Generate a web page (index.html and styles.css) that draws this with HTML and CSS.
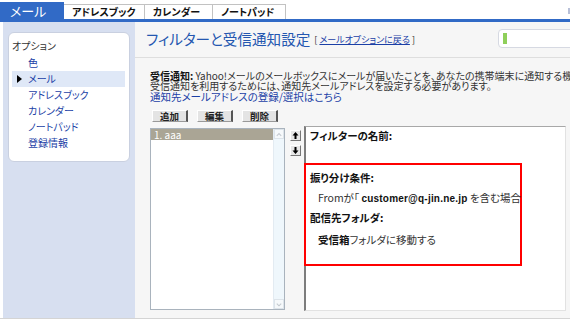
FILE: index.html
```html
<!DOCTYPE html>
<html lang="ja">
<head>
<meta charset="utf-8">
<title>フィルターと受信通知設定</title>
<link rel="stylesheet" href="styles.css">
</head>
<body>
<div class="page">
  <div class="tabs">
    <div class="tab active">メール</div>
    <div class="tab t-addr">アドレスブック</div>
    <div class="tab t-cal">カレンダー</div>
    <div class="tab t-note">ノートパッド</div>
    <div class="tab-fill"><span class="grip"></span></div>
  </div>
  <div class="bar"></div>
  <div class="body">
    <aside class="side">
      <div class="sidebox">
        <div class="side-title">オプション</div>
        <ul class="side-list">
          <li><a>色</a></li>
          <li class="current"><span class="tri"></span><a>メール</a></li>
          <li><a>アドレスブック</a></li>
          <li><a>カレンダー</a></li>
          <li><a>ノートパッド</a></li>
          <li><a>登録情報</a></li>
        </ul>
      </div>
    </aside>
    <main class="main">
      <div class="head">
        <h1>フィルターと受信通知設定</h1>
        <span class="back">[ <a>メールオプションに戻る</a> ]</span>
        <div class="meter"><span class="meter-fill"></span></div>
      </div>
      <div class="content">
        <div class="notice">
          <div class="nline"><b>受信通知:</b> Yahoo!メールのメールボックスにメールが届いたことを、あなたの携帯端末に通知する機能です。</div>
          <div class="nline">受信通知を利用するためには、通知先メールアドレスを設定する必要があります。</div>
          <a class="nlink">通知先メールアドレスの登録/選択はこちら</a>
        </div>
        <div class="btns">
          <span class="btn">追加</span>
          <span class="btn">編集</span>
          <span class="btn">削除</span>
        </div>
        <div class="editor">
          <div class="list">
            <div class="items">
              <div class="item sel">1. aaa</div>
            </div>
            <div class="scroll">
              <span class="sarrow"><svg width="9" height="9" viewBox="0 0 9 9"><path d="M2 6 L4.5 3.5 L7 6" fill="none" stroke="#c4cad0" stroke-width="1.2"/></svg></span>
              <span class="sarrow"><svg width="9" height="9" viewBox="0 0 9 9"><path d="M2 3.5 L4.5 6 L7 3.5" fill="none" stroke="#c4cad0" stroke-width="1.2"/></svg></span>
            </div>
          </div>
          <div class="arrows">
            <span class="abtn"><svg width="9" height="9" viewBox="0 0 9 9"><path d="M4.5 1 L1.5 4.5 H3.5 V8 H5.5 V4.5 H7.5 Z" fill="#000"/></svg></span>
            <span class="abtn"><svg width="9" height="9" viewBox="0 0 9 9"><path d="M4.5 8 L1.5 4.5 H3.5 V1 H5.5 V4.5 H7.5 Z" fill="#000"/></svg></span>
          </div>
          <div class="panel">
            <div class="plabel">フィルターの名前:</div>
            <div class="rule">
              <div class="plabel">振り分け条件:</div>
              <div class="pline">Fromが「 <b class="addr">customer@q-jin.ne.jp</b> を含む場合</div>
              <div class="plabel gap2">配信先フォルダ:</div>
              <div class="pline gap3"><b>受信箱</b>フォルダに移動する</div>
            </div>
          </div>
        </div>
      </div>
    </main>
  </div>
</div>
</body>
</html>
```
FILE: styles.css
```css
* { box-sizing: border-box; }
html, body { margin: 0; padding: 0; }
body {
  width: 570px;
  height: 326px;
  overflow: hidden;
  background: #fff;
  font-family: "Noto Sans CJK JP", "Noto Sans", sans-serif;
  font-feature-settings: "palt";
  color: #222;
}
a { color: #1b3fa6; cursor: pointer; }
ul { list-style: none; margin: 0; padding: 0; }

.page { width: 570px; }

/* tabs */
.tabs {
  display: flex;
  height: 19px;
  align-items: flex-end;
}
.tab {
  height: 15px;
  border: 1px solid #c2c2c2;
  border-bottom: none;
  border-left: none;
  background: #fff;
  font-size: 10px;
  font-weight: bold;
  line-height: 14px;
  color: #111;
  padding-left: 8px;
  white-space: nowrap;
}
.tab.active {
  height: 17px;
  width: 64px;
  background: #316ac6;
  border: none;
  color: #fff;
  font-size: 13px;
  font-weight: normal;
  line-height: 18px;
  padding-left: 10px;
}
.t-addr { width: 81px; }
.t-cal { width: 68px; }
.t-note { width: 73px; }
.tab-fill {
  flex: 1;
  height: 19px;
  position: relative;
}
.grip {
  position: absolute;
  right: 0;
  top: 8px;
  width: 2px;
  height: 6px;
  background: #b8c0d8;
}
.bar {
  height: 3px;
  background: #316ac6;
}

/* body */
.body {
  display: flex;
  height: 297px;
  border-bottom: 1px solid #d4d4d4;
}
.side {
  width: 132px;
  margin-left: 3px;
  background: #d7dff0;
  padding: 10px 5px 0 5px;
}
.sidebox {
  background: #fff;
  border: 1px solid #c9d0e0;
  border-radius: 6px;
  height: 130px;
  padding: 4px 0 0 0;
}
.side-title {
  font-size: 10px;
  line-height: 18px;
  color: #333;
  padding-left: 3px;
}
.side-list li {
  height: 16px;
  line-height: 16px;
  font-size: 10px;
  padding-left: 16px;
  margin: 0 4px 0 3px;
  position: relative;
}
.side-list li a { color: #1b3fa6; }
.side-list li.current { background: #dfe8f7; }
.tri {
  position: absolute;
  left: 5px;
  top: 4px;
  width: 0;
  height: 0;
  border-top: 4px solid transparent;
  border-bottom: 4px solid transparent;
  border-left: 5px solid #000;
}

/* main */
.main {
  flex: 1;
  background: #f6f6f6;
  overflow: hidden;
}
.head {
  display: flex;
  align-items: center;
  height: 36px;
  border-bottom: 1px solid #dedede;
  padding-left: 11px;
}
.head h1 {
  margin: 0;
  font-size: 14.6px;
  font-weight: normal;
  color: #2457b0;
  line-height: 18px;
  white-space: nowrap;
  margin-top: -2px;
}
.back {
  font-size: 9px;
  color: #333;
  margin-left: 4px;
  white-space: nowrap;
}
.back a { text-decoration: underline; }
.meter {
  margin-left: auto;
  margin-right: -8px;
  width: 80px;
  height: 19px;
  flex-shrink: 0;
  border: 1px solid #d6d9e2;
  border-radius: 4px;
  background: #fff;
  padding: 3px 4px;
  margin-top: -2px;
}
.meter-fill {
  display: block;
  width: 4px;
  height: 11px;
  background: #8fcf5a;
}

.content {
  padding: 13px 0 0 15px;
}
.notice {
  font-size: 10px;
  color: #333;
  white-space: nowrap;
}
.nline { line-height: 10px; }
.nline b { color: #111; }
.nlink {
  display: block;
  line-height: 12px;
  font-size: 10.5px;
}
.btns {
  display: flex;
  gap: 9px;
  margin: 7px 0 0 2px;
}
.btn {
  width: 36px;
  height: 12px;
  background: #e4e4e4;
  border-top: 1px solid #fff;
  border-left: 1px solid #fff;
  border-right: 2px solid #555;
  border-bottom: 1px solid #999;
  font-size: 9.5px;
  font-weight: bold;
  line-height: 10px;
  text-align: center;
  color: #222;
}

.editor {
  display: flex;
  align-items: flex-start;
  margin-top: 4px;
}
.list {
  margin-top: 2px;
  width: 135px;
  height: 182px;
  border: 1px solid #a9b3bd;
  background: #fff;
  display: flex;
}
.items { flex: 1; }
.item {
  height: 11px;
  font-size: 10px;
  line-height: 11px;
  padding-left: 3px;
}
.item.sel { background: #aaa595; color: #fff; }
.scroll {
  width: 11px;
  background: #eff7fc;
  border-left: 1px solid #e3ebf2;
  display: flex;
  flex-direction: column;
  justify-content: space-between;
}
.sarrow {
  display: flex;
  justify-content: center;
  align-items: center;
  height: 10px;
  border: 1px solid #dde4ea;
  background: #f6f9fb;
}
.arrows {
  display: flex;
  flex-direction: column;
  gap: 4px;
  margin: 4px 0 0 5px;
}
.abtn {
  display: flex;
  align-items: center;
  justify-content: center;
  width: 11px;
  height: 11px;
  background: #e8e8e8;
  border-top: 1px solid #fff;
  border-left: 1px solid #fff;
  border-right: 1px solid #777;
  border-bottom: 1px solid #777;
}
.panel {
  margin-left: 3px;
  width: 262px;
  height: 185px;
  background: #fff;
  border-left: 2px solid #7d7d7d;
  border-top: 1px solid #a8a8a8;
  border-right: 1px solid #e2e2e2;
  border-bottom: 1px solid #e2e2e2;
  padding-top: 3px;
}
.plabel {
  font-size: 10.5px;
  font-weight: bold;
  line-height: 12px;
  color: #111;
  padding-left: 4px;
}
.rule {
  margin: 21px 0 0 -2px;
  width: 218px;
  height: 103px;
  border: 2px solid #f00;
  padding: 7px 0 0 0;
}
.pline {
  font-size: 10.5px;
  line-height: 12px;
  color: #333;
  padding-left: 12px;
  margin-top: 8px;
  white-space: nowrap;
}
.pline b { color: #111; }
.addr {
  font-family: "Liberation Sans", sans-serif;
  font-size: 10px;
  letter-spacing: 0.2px;
}
.gap2 { margin-top: 7px; }
.gap3 { margin-top: 10px; }
```
